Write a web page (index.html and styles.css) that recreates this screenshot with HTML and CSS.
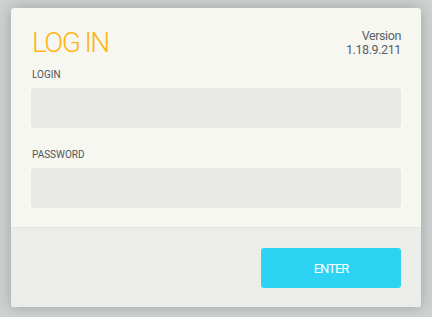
FILE: index.html
```
<!doctype html>
<html lang="en">
<head>
    <meta charset="UTF-8">
    <title>log in</title>
    <link rel="stylesheet" href="styles.css">
</head>
<body>
<div class="card">
    <div class="card_body">
        <div class="card_head">
            <h1 class="title">LOG IN</h1>
            <div class="version">Version<br>1.18.9.211</div>
        </div>
        <label class="field_label field_label_first">Login</label>
        <input class="field_input" type="text">
        <label class="field_label">Password</label>
        <input class="field_input" type="password">
    </div>
    <div class="card_foot">
        <button class="enter_btn">ENTER</button>
    </div>
</div>
</body>
</html>
```
FILE: styles.css
```
* {
    box-sizing: border-box;
    margin: 0;
    padding: 0;
}

body {
    width: 432px;
    height: 317px;
    padding: 8px 11px;
    background-color: #cdd1d0;
    font-family: Roboto, "Liberation Sans", sans-serif;
    overflow: hidden;
}

.card {
    width: 410px;
    height: 299px;
    border-radius: 3px;
    background-color: #f7f7f2;
    box-shadow: 0 0 14px rgba(0, 0, 0, 0.22);
    overflow: hidden;
}

.card_body {
    display: flex;
    flex-direction: column;
    padding: 20px 20px 19px 20px;
}

.card_head {
    display: flex;
    justify-content: space-between;
    align-items: flex-start;
    padding-left: 1px;
}

.title {
    font-size: 28px;
    font-weight: 300;
    line-height: 30px;
    letter-spacing: -1.6px;
    color: #fdb515;
}

.version {
    font-size: 12.5px;
    line-height: 14px;
    letter-spacing: -0.4px;
    text-align: right;
    color: #5b6067;
    padding-top: 1px;
}

.field_label {
    display: block;
    margin: 21px 0 7px 1px;
    font-size: 10px;
    line-height: 12px;
    text-transform: uppercase;
    color: #4f535a;
}

.field_label_first {
    margin-top: 11px;
}

.field_input {
    height: 40px;
    border: none;
    border-radius: 4px;
    background-color: #e8e9e4;
    outline: none;
}

.card_foot {
    display: flex;
    justify-content: flex-end;
    height: 80px;
    padding: 20px 20px 0;
    border-top: 1px solid #e3e4df;
    background-color: #ecede8;
}

.enter_btn {
    width: 140px;
    height: 40px;
    border: none;
    border-radius: 3px;
    background-color: #2dd3f3;
    font-family: Roboto, "Liberation Sans", sans-serif;
    font-size: 13px;
    letter-spacing: -1px;
    color: #fff;
}
```
